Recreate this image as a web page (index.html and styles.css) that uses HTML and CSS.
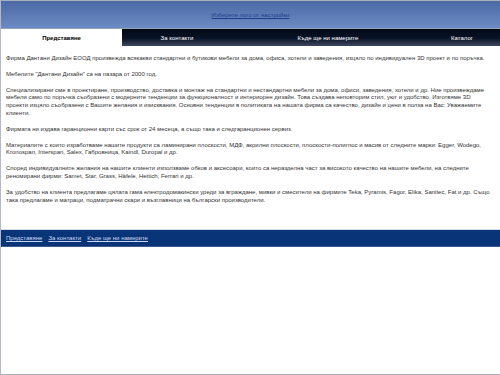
FILE: index.html
```html
<!DOCTYPE html>
<html lang="bg">
<head>
<meta charset="utf-8">
<title>Дантани Дизайн</title>
<link rel="stylesheet" href="styles.css">
</head>
<body>
<div class="page">
  <header class="header">
    <a class="logo-link" href="#">Изберете лого от настройки</a>
  </header>
  <nav class="tabs">
    <a class="tab active" href="#">Представяне</a>
    <a class="tab" href="#">За контакти</a>
    <a class="tab" href="#">Къде ще ни намерите</a>
    <a class="tab" href="#">Каталог</a>
  </nav>
  <main class="content">
    <p>Фирма Дантани Дизайн ЕООД произвежда всякакви стандартни и бутикови мебели за дома, офиса, хотели и заведения, изцяло по индивидуален 3D проект и по поръчка.</p>
    <p>Мебелите "Дантани Дизайн" са на пазара от 2000 год.</p>
    <p>Специализирани сме в проектиране, производство, доставка и монтаж на стандартни и нестандартни мебели за дома, офиси, заведения, хотели и др. Ние произвеждаме мебели само по поръчка съобразени с модерните тенденции за функционалност и интериорен дизайн. Това създава неповторим стил, уют и удобство. Изготвяме 3D проекти изцяло съобразени с Вашите желания и изисквания. Основни тенденции в политиката на нашата фирма са качество, дизайн и цени в полза на Вас: Уважаемите клиенти.</p>
    <p>Фирмата ни издава гаранционни карти със срок от 24 месеца, а също така и следгаранционен сервиз.</p>
    <p>Материалите с които изработваме нашите продукти са ламинирани плоскости, МДФ, акрилни плоскости, плоскости-полигпос и масив от следните марки: Egger, Wodego, Kronospan, Interspan, Salex, Габровница, Kaindl, Duropal и др.</p>
    <p>Според индивидуалните желания на нашите клиенти използваме обков и аксесоари, които са неразделна част за високото качество на нашите мебели, на следните реномирани фирми: Samet, Star, Grass, Häfele, Hettich, Ferrari и др.</p>
    <p>За удобство на клиента предлагаме цялата гама електродомакински уреди за вграждане, мивки и смесители на фирмите Teka, Pyramis, Fagor, Elika, Sanitec, Fat и др. Също така предлагаме и матраци, подматрачни скари и възглавници на български производители.</p>
  </main>
  <footer class="footer">
    <a href="#">Представяне</a>
    <a href="#">За контакти</a>
    <a href="#">Къде ще ни намерите</a>
  </footer>
</div>
</body>
</html>
```
FILE: styles.css
```css
html, body {
  margin: 0;
  padding: 0;
  background: #ffffff;
}
body {
  font-family: "Liberation Sans", Arial, sans-serif;
  font-size: 6px;
  color: #333333;
}
.page {
  width: 499px;
  height: 373px;
  border-left: 1px solid #b3bac4;
  border-top: 1px solid #a9b0ba;
  border-bottom: 1px solid #a9b0ba;
  display: flex;
  flex-direction: column;
}
.header {
  height: 27px;
  background: linear-gradient(#4b69a5, #6c8bc2);
  display: flex;
  align-items: center;
  justify-content: center;
}
.logo-link {
  color: #1d3f8c;
  text-decoration: underline;
  font-size: 6px;
  margin-top: 1px;
}
.tabs {
  height: 17px;
  display: grid;
  grid-template-columns: 121fr 110fr 192fr 76fr;
  background: linear-gradient(#000814 0%, #0a1428 55%, #3c4860 100%);
  border-top: 1px solid #8fa0bd;
}
.tab {
  display: flex;
  align-items: center;
  justify-content: center;
  color: #ffffff;
  text-decoration: none;
  font-size: 6px;
}
.tab.active {
  background: #ffffff;
  color: #000000;
  font-weight: bold;
}
.content {
  padding: 2px 8px 0 5px;
  height: 183px;
  box-sizing: border-box;
}
.content p {
  margin: 8px 0 0;
  line-height: 7.8px;
}
.content p:first-child {
  margin-top: 7px;
}
.footer {
  height: 16px;
  background: #0a3478;
  border-top: 1px solid #d6dbe4;
  border-bottom: 1px solid #3c5a92;
  display: flex;
  align-items: center;
  gap: 6px;
  padding-left: 5px;
}
.footer a {
  color: #c9d6ee;
  text-decoration: underline;
  font-size: 6px;
}
```
